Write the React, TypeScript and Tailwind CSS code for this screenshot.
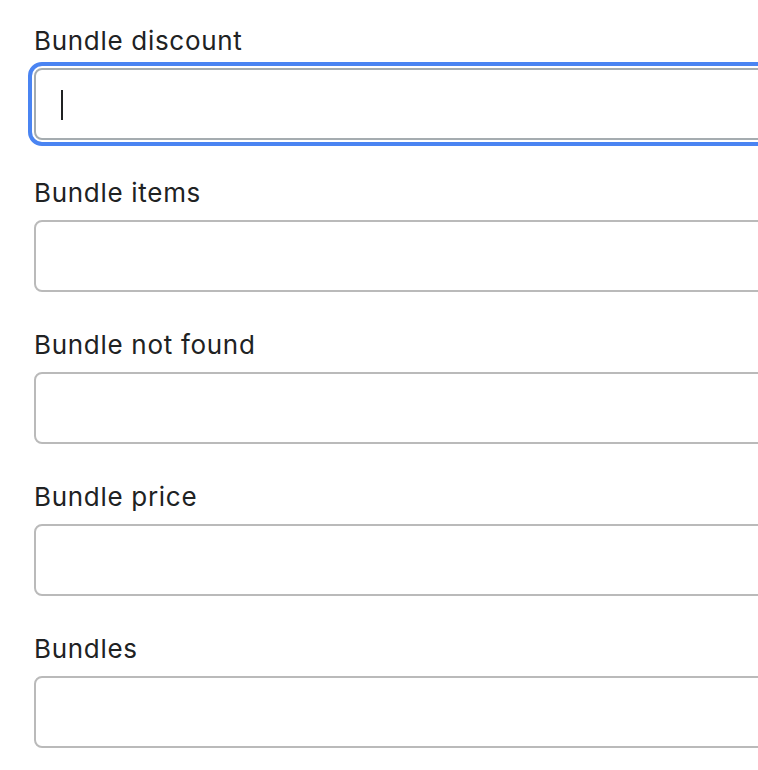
const fields = ["Bundle discount", "Bundle items", "Bundle not found", "Bundle price", "Bundles"];

export default function App() {
  return (
    <div className="w-[758px] h-[770px] overflow-hidden bg-white" style={{ fontFamily: "Inter, 'Liberation Sans', sans-serif" }}>
      <div className="flex flex-col gap-[36px] pl-[34px] pt-[24px]">
        {fields.map((label, i) => (
          <div key={label} className="flex flex-col gap-[10px]">
            <label className="text-[26px] leading-[34px] tracking-[0.7px] text-[#202223]">{label}</label>
            <div
              className={
                "relative w-[800px] h-[72px] rounded-[8px] border-2 bg-white " +
                (i === 0
                  ? "border-[#a5acb0] outline-[4px] outline-solid outline-[#4a84f2] outline-offset-[2px]"
                  : "border-[#bababa]")
              }
            >
              {i === 0 && <span className="absolute left-[25px] top-[20px] w-[2px] h-[30px] bg-[#202223]" />}
            </div>
          </div>
        ))}
      </div>
    </div>
  );
}
